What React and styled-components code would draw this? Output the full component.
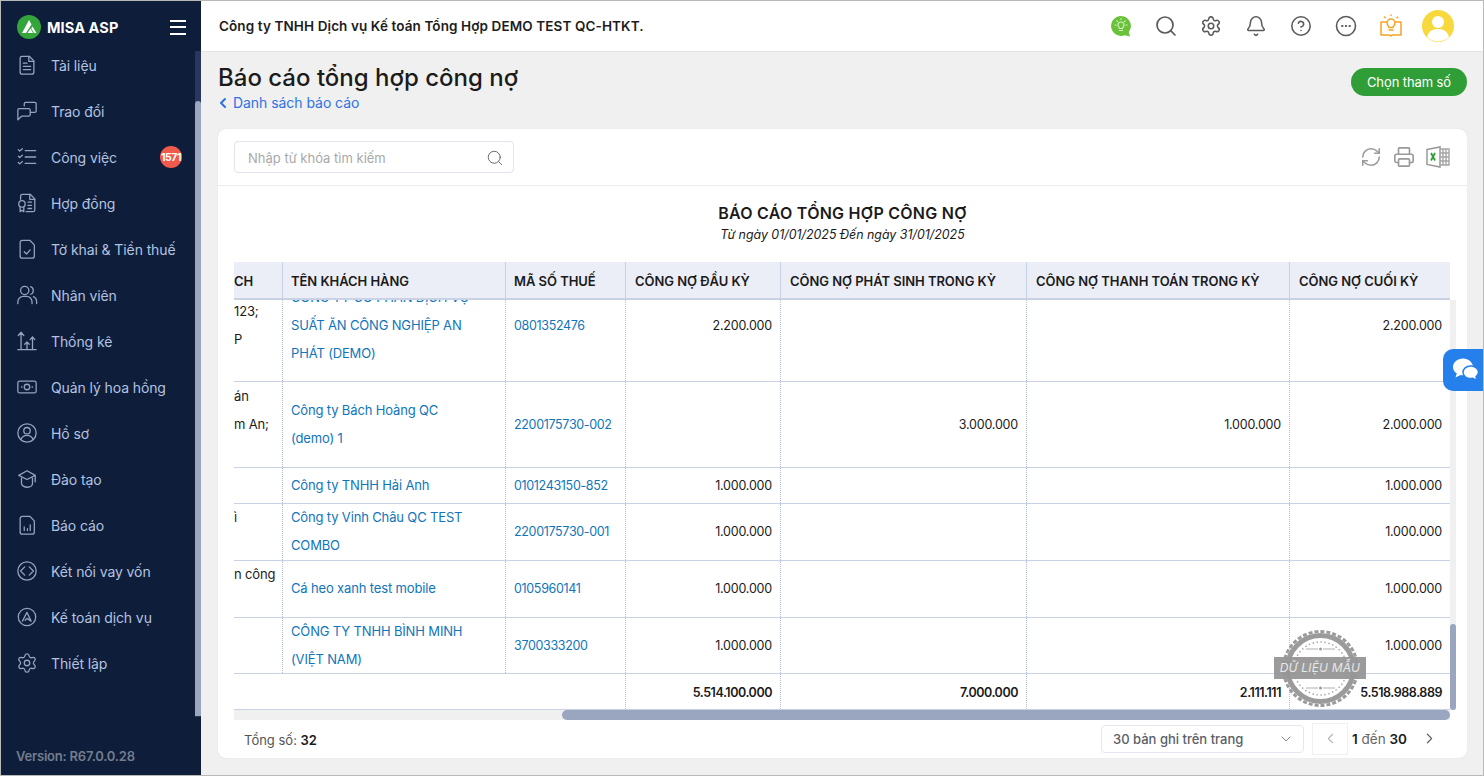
import React from 'react';
import styled, { createGlobalStyle } from 'styled-components';
import { Search, Settings, Bell, CircleHelp, RefreshCw, Printer, ChevronLeft, ChevronRight, ChevronDown } from 'lucide-react';

const GlobalStyle = createGlobalStyle`
    * { box-sizing: border-box; }
    html, body { margin: 0; padding: 0; }
    body { font-family: Inter, "Noto Sans", sans-serif; color: #1a1a1a; overflow: hidden; }
`

const Shell = styled.div`
    display: flex;
    width: 1484px;
    height: 776px;
    border: 1px solid #b9b9b9;
    overflow: hidden;
    position: relative;
`

const Sidebar = styled.aside`
    display: flex;
    flex-direction: column;
    width: 200px;
    flex: none;
    background: #0e1e3a;
    color: #b4c3e0;
`

const Brand = styled.div`
    display: flex;
    align-items: center;
    height: 50px;
    padding: 2px 15px 0 16px;
    gap: 6px;
    flex: none;
`

const BrandName = styled.span`
    flex: 1;
    font-size: 14.5px;
    font-weight: 700;
    letter-spacing: 0.1px;
    color: #fff;
`

const Burger = styled.div`
    display: flex;
    flex-direction: column;
    gap: 4.5px;
    width: 16px;
    span { height: 2px; background: #fff; }
`

const NavArea = styled.div`
    flex: 1;
    display: flex;
    min-height: 0;
`

const NavList = styled.nav`
    flex: 1;
    overflow: hidden;
`

const NavItem = styled.div`
    display: flex;
    align-items: center;
    height: 46px;
    padding-left: 15px;
    font-size: 14px;
    letter-spacing: -0.1px;
    color: #b4c3e0;
    &:first-child { margin-top: -9px; }
`

const NavIcon = styled.svg`
    width: 22px;
    height: 22px;
    margin-right: 13px;
    flex: none;
    fill: none;
    stroke: #93a3c2;
    stroke-width: 1.4;
    stroke-linecap: round;
    stroke-linejoin: round;
`

const Badge = styled.span`
    margin-left: auto;
    margin-right: 13px;
    width: 22px;
    height: 22px;
    border-radius: 50%;
    background: #ef5a4c;
    color: #fff;
    font-size: 10.5px;
    font-weight: 700;
    letter-spacing: -0.5px;
    display: flex;
    align-items: center;
    justify-content: center;
`

const NavScroll = styled.div`
    width: 6px;
    flex: none;
    background: #2a3560;
    display: flex;
    flex-direction: column;
`

const NavThumb = styled.div`
    margin-top: 50px;
    height: 615px;
    background: #9aa5bf;
    border-radius: 3px 3px 0 0;
`

const Version = styled.div`
    height: 58px;
    flex: none;
    padding: 31px 0 0 15px;
    font-size: 13px;
    font-weight: 600;
    letter-spacing: -0.2px;
    color: #737d8e;
`

const Main = styled.div`
    flex: 1;
    display: flex;
    flex-direction: column;
    min-width: 0;
    background: #f0f0f0;
`

const Topbar = styled.header`
    display: flex;
    align-items: center;
    height: 51px;
    flex: none;
    padding: 0 29px 0 18px;
    background: #fff;
    border-bottom: 1px solid #e4e4e4;
`

const Company = styled.div`
    flex: 1;
    font-size: 13.5px;
    letter-spacing: 0.1px;
    font-weight: 600;
    color: #1d1d1d;
`

const TopIcons = styled.div`
    display: flex;
    align-items: center;
`

const TopIcon = styled.span`
    display: flex;
    align-items: center;
    justify-content: center;
    width: 45px;
    color: #5a5a5a;
`

const Avatar = styled.span`
    display: flex;
    margin-left: 9px;
`

const Page = styled.main`
    flex: 1;
    min-height: 0;
    display: flex;
    flex-direction: column;
    padding: 0 16px 17px 17px;
`

const PageHead = styled.div`
    display: flex;
    justify-content: space-between;
    align-items: flex-start;
    height: 77px;
    flex: none;
    padding-top: 11px;
`

const Title = styled.h1`
    margin: 0;
    font-size: 24px;
    line-height: 30px;
    font-weight: 500;
    color: #1b1b1b;
`

const BackLink = styled.a`
    display: flex;
    align-items: center;
    gap: 2px;
    margin-left: -3px;
    font-size: 14px;
    letter-spacing: -0.05px;
    line-height: 20px;
    color: #2f72e4;
`

const GreenButton = styled.button`
    margin-top: 5px;
    width: 116px;
    height: 28px;
    border: 0;
    border-radius: 14px;
    background: #2f9e37;
    color: #fff;
    font: 400 13px Inter, sans-serif;
    letter-spacing: -0.1px;
`

const Card = styled.section`
    flex: 1;
    min-height: 0;
    display: flex;
    flex-direction: column;
    position: relative;
    background: #fff;
    border-radius: 8px;
    box-shadow: 0 0 1px rgba(0, 0, 0, 0.15);
`

const Toolbar = styled.div`
    display: flex;
    align-items: center;
    justify-content: space-between;
    height: 57px;
    flex: none;
    padding: 0 17px 0 16px;
    border-bottom: 1px solid #ececec;
`

const SearchBox = styled.div`
    display: flex;
    align-items: center;
    justify-content: space-between;
    width: 280px;
    height: 32px;
    padding: 1px 9px 0 13px;
    border: 1px solid #e1e4ec;
    border-radius: 4px;
    font-size: 13px;
    color: #a9a9a9;
`

const Tools = styled.div`
    display: flex;
    align-items: center;
    gap: 11px;
    color: #9b9b9b;
`

const ReportHead = styled.div`
    height: 76px;
    flex: none;
    padding-top: 17px;
    text-align: center;
`

const ReportTitle = styled.div`
    font-size: 16px;
    letter-spacing: 0.25px;
    line-height: 20px;
    font-weight: 600;
    color: #1b1b1b;
`

const ReportRange = styled.div`
    margin-top: 3px;
    font-size: 12.4px;
    line-height: 18px;
    font-style: italic;
`

const TableWrap = styled.div`
    margin: 0 11px 0 16px;
`

const gridCols = '48px 223px 120px 155px 246px 263px 161px'

const HeadRow = styled.div`
    display: grid;
    grid-template-columns: ${gridCols};
    width: 1216px;
    height: 38px;
    background: #ebeef7;
    border-bottom: 2px solid #c9d1e4;
`

const HeadCell = styled.div`
    display: flex;
    align-items: center;
    padding: 2px 0 0 8px;
    border-left: 1px solid #c9d1e4;
    font-size: 13px;
    letter-spacing: -0.05px;
    font-weight: 600;
    color: #1b1b1b;
    white-space: nowrap;
    overflow: hidden;
    &:first-child { padding-left: 0; border-left: 0; }
    &:nth-child(n + 4) { padding-left: 9px; }
`

const BodyArea = styled.div`
    display: flex;
    height: 410px;
`

const Viewport = styled.div`
    width: 1216px;
    flex: none;
    overflow: hidden;
`

const Row = styled.div`
    display: grid;
    grid-template-columns: ${gridCols};
    height: ${p => p.$h}px;
    margin-top: ${p => p.$top || 0}px;
    border-bottom: 1px solid #c9d1e4;
`

const Cell = styled.div`
    display: flex;
    align-items: center;
    border-left: 1px dotted #b4c0da;
    font-size: 13px;
    line-height: 28px;
    color: #1b1b1b;
    overflow: hidden;
`

const LeadCell = styled(Cell)`
    border-left: 0;
    padding-bottom: 2px;
    white-space: pre;
    letter-spacing: -0.15px;
`

const BlankCell = styled(Cell)`
    border-left: 0;
`

const NameCell = styled(Cell)`
    padding: 0 24px 2px 8px;
    letter-spacing: -0.15px;
    color: #0f75bc;
`

const TaxCell = styled(Cell)`
    padding-left: 8px;
    font-size: 12.5px;
    letter-spacing: -0.33px;
    white-space: nowrap;
    color: #0f75bc;
`

const AmountCell = styled(Cell)`
    justify-content: flex-end;
    padding: ${p => (p.$bold ? 2 : 0)}px 8px 0 0;
    font-size: 12.5px;
    letter-spacing: ${p => (p.$bold ? -0.45 : -0.2)}px;
    font-weight: ${p => (p.$bold ? 600 : 400)};
`

const VTrack = styled.div`
    width: 6px;
    background: #f0f0f0;
    display: flex;
    flex-direction: column;
    justify-content: flex-end;
`

const VThumb = styled.div`
    height: 86px;
    background: #9aa5bf;
    border-radius: 3px;
`

const HTrack = styled.div`
    width: 1216px;
    height: 10px;
    background: #f0f0f0;
    display: flex;
    justify-content: flex-end;
`

const HThumb = styled.div`
    width: 888px;
    background: #9aa5bf;
    border-radius: 5px;
`

const Footer = styled.div`
    flex: 1;
    display: flex;
    align-items: center;
    padding: 0 29px 1px 26px;
    font-size: 13px;
    color: #555;
`

const Total = styled.div`
    flex: 1;
    margin-top: 2px;
    b { color: #1b1b1b; font-weight: 600; }
`

const PageSize = styled.div`
    display: flex;
    align-items: center;
    justify-content: space-between;
    width: 203px;
    height: 28px;
    padding: 0 9px 0 11px;
    border: 1px solid #e4e7ef;
    border-radius: 4px;
    font-weight: 500;
    color: #5a5f68;
`

const PrevBox = styled.span`
    display: flex;
    align-items: center;
    justify-content: center;
    width: 36px;
    height: 32px;
    margin: 0 4px 0 8px;
    border: 1px solid #f0f0f0;
    color: #b5b5b5;
`

const PageInfo = styled.span`
    font-size: 13.5px;
    color: #666;
    b { color: #1b1b1b; font-weight: 600; }
`

const NextBox = styled.span`
    display: flex;
    margin-left: 14px;
    color: #666;
`

const Stamp = styled.div`
    position: absolute;
    left: 1056px;
    top: 501px;
    width: 92px;
    height: 77px;
    display: flex;
    justify-content: center;
    pointer-events: none;
`

const StampBand = styled.div`
    position: absolute;
    left: 0;
    right: 0;
    top: 27px;
    height: 22px;
    background: rgba(150, 150, 150, 0.95);
    color: #e8e8e8;
    font-size: 12px;
    font-style: italic;
    line-height: 22px;
    text-align: center;
    letter-spacing: 0.2px;
    white-space: nowrap;
`

const ChatFab = styled.div`
    position: absolute;
    right: 0;
    top: 348px;
    width: 40px;
    height: 42px;
    padding-left: 5px;
    background: #2680eb;
    border-radius: 10px 0 0 10px;
    display: flex;
    align-items: center;
    justify-content: center;
`

const navItems = [
    { label: 'Tài liệu', icon: <><path d="M6.5 2.5h8l5 5v12a2.5 2.5 0 0 1-2.5 2.5H7a2.5 2.5 0 0 1-2.5-2.5v-15a2 2 0 0 1 2-2z" /><path d="M14 2.5V8h5.5M8 10h4M8 13.5h8M8 17h8" /></> },
    { label: 'Trao đổi', icon: <><path d="M9 6.5V4a1.5 1.5 0 0 1 1.5-1.5h10A1.5 1.5 0 0 1 22 4v8a1.5 1.5 0 0 1-1.5 1.5H16" /><path d="M3.5 9.5H14a1.5 1.5 0 0 1 1.5 1.5v5a1.5 1.5 0 0 1-1.5 1.5H6.5L2 21.5V11a1.5 1.5 0 0 1 1.5-1.5z" /></> },
    { label: 'Công việc', badge: '1571', icon: <><path d="M10 5h11.5M10 12h11.5M10 19h11.5M2.5 4l1.5 1.5L7 3M2.5 11l1.5 1.5L7 10M2.5 18l1.5 1.5L7 17" /></> },
    { label: 'Hợp đồng', icon: <><path d="M5 8V4.500A2 2 0 0 1 7 2.500h8.500l5 5V19.500a2 2 0 0 1-2 2H11" /><path d="M15 2.500V8h5.500M13 11h4M13 14.500h4M13 18h4" /><circle cx="6.500" cy="13" r="3.500" /><path d="M4.500 16v5.500l2-1.500 2 1.500V16" /></> },
    { label: 'Tờ khai & Tiền thuế', icon: <><path d="M7 2.500h8l5 5v12a2.500 2.500 0 0 1-2.500 2.500h-10.500A2.500 2.500 0 0 1 4.500 19.500V5A2.500 2.500 0 0 1 7 2.500z" /><path d="M9 15l2.500 2.500L15.500 13" /></> },
    { label: 'Nhân viên', icon: <><circle cx="9.500" cy="7" r="4.500" /><path d="M2 21.500v-2a6 6 0 0 1 6-6h3.500a6 6 0 0 1 6 6v2M16 2.800a4.500 4.500 0 0 1 0 8.400M19 13.800a6 6 0 0 1 3.500 5.500v2" /></> },
    { label: 'Thống kê', icon: <><path d="M2 21.500h20M5.500 21V3M2.500 6l3-3.500 3 3.500M12 21v-8M9.500 15.500l2.500-2.500 2.500 2.500M18 21V7.500M15.500 10.500l2.500-3 2.500 3" /></> },
    { label: 'Quản lý hoa hồng', icon: <><rect x="2" y="5.500" width="20" height="13" rx="2" /><circle cx="12" cy="12" r="3" /><path d="M6 12h.5M17.500 12h.5" /></> },
    { label: 'Hồ sơ', icon: <><circle cx="12" cy="12" r="10" /><circle cx="12" cy="9.500" r="3.500" /><path d="M5.500 19c1-3 3.500-4.500 6.500-4.500s5.500 1.500 6.500 4.500" /></> },
    { label: 'Đào tạo', icon: <><path d="M12 3l9 5-9 4.500L3 8z" /><path d="M6 11v6c0 2 3 4 6.500 4s5.500-2 5.500-4v-6M21 8.500V15" /></> },
    { label: 'Báo cáo', icon: <><path d="M7 2.500h8l5 5v12a2.500 2.500 0 0 1-2.500 2.500h-10.500A2.500 2.500 0 0 1 4.500 19.500V5A2.500 2.500 0 0 1 7 2.500z" /><path d="M9 18v-4M12.500 18v-2M15.500 18v-6" /></> },
    { label: 'Kết nối vay vốn', icon: <><circle cx="12" cy="12" r="10" /><path d="M9.500 7.500L5 12l4.500 4.500M14.500 7.500L19 12l-4.500 4.500" /></> },
    { label: 'Kế toán dịch vụ', icon: <><circle cx="12" cy="12" r="9.500" /><path d="M7 16.500L12 7l4.500 9.500-4.500-3-2 2" /></> },
]

const rows = [
    { h: 112, top: -30, lead: '123;\nP', name: 'CÔNG TY CỔ PHẦN DỊCH VỤ SUẤT ĂN CÔNG NGHIỆP AN PHÁT (DEMO)', tax: '0801352476', start: '2.200.000', end: '2.200.000' },
    { h: 86, lead: 'án\nm An;\n\u00a0', name: 'Công ty Bách Hoàng QC (demo) 1', tax: '2200175730-002', gen: '3.000.000', paid: '1.000.000', end: '2.000.000' },
    { h: 36, lead: '', name: 'Công ty TNHH Hải Anh', tax: '0101243150-852', start: '1.000.000', end: '1.000.000' },
    { h: 57, lead: 'ì\n\u00a0', name: 'Công ty Vinh Châu QC TEST COMBO', tax: '2200175730-001', start: '1.000.000', end: '1.000.000' },
    { h: 57, lead: 'n công\n\u00a0', name: 'Cá heo xanh test mobile', tax: '0105960141', start: '1.000.000', end: '1.000.000' },
    { h: 56, lead: '', name: 'CÔNG TY TNHH BÌNH MINH (VIỆT NAM)', tax: '3700333200', start: '1.000.000', end: '1.000.000' },
]

const heads = ['CH', 'TÊN KHÁCH HÀNG', 'MÃ SỐ THUẾ', 'CÔNG NỢ ĐẦU KỲ', 'CÔNG NỢ PHÁT SINH TRONG KỲ', 'CÔNG NỢ THANH TOÁN TRONG KỲ', 'CÔNG NỢ CUỐI KỲ']

function App() {
    return (
        <Shell>
            <GlobalStyle />
            <Sidebar>
                <Brand>
                    <svg width="24" height="24" viewBox="0 0 24 24">
                        <circle cx="12" cy="12" r="12" fill="#33a53b" />
                        <path d="M5 18L12 5l2.500 4.500L9 18zM10.500 18l3-4.500L16 18zM15.500 11.500L19.500 18h-2.500l-2.800-4.500z" fill="#fff" />
                    </svg>
                    <BrandName>MISA ASP</BrandName>
                    <Burger><span /><span /><span /></Burger>
                </Brand>
                <NavArea>
                    <NavList>
                        {navItems.map(item => (
                            <NavItem key={item.label}>
                                <NavIcon viewBox="0 0 24 24">{item.icon}</NavIcon>
                                {item.label}
                                {item.badge && <Badge>{item.badge}</Badge>}
                            </NavItem>
                        ))}
                        <NavItem>
                            <Settings size={22} strokeWidth={1.4} color="#93a3c2" style={{ marginRight: 13, flex: 'none' }} />
                            Thiết lập
                        </NavItem>
                    </NavList>
                    <NavScroll><NavThumb /></NavScroll>
                </NavArea>
                <Version>Version: R67.0.0.28</Version>
            </Sidebar>
            <Main>
                <Topbar>
                    <Company>Công ty TNHH Dịch vụ Kế toán Tổng Hợp DEMO TEST QC-HTKT.</Company>
                    <TopIcons>
                        <TopIcon>
                            <svg width="22" height="22" viewBox="0 0 22 22">
                                <path d="M11 1a10 10 0 1 0 4 19.200L20 21.500l-1.200-4.500A10 10 0 0 0 11 1z" fill="#69c23a" />
                                <path d="M8 10a3 3 0 1 1 6 0c0 1.500-1.200 2-1.500 3.500h-3C9.200 12 8 11.500 8 10zM9.500 15.500h3M11 3.500v1M5 10h1M16 10h1M6.800 5.800l.7.7M15.200 5.800l-.7.7" fill="none" stroke="#d7f2c4" strokeWidth="1.100" strokeLinecap="round" />
                            </svg>
                        </TopIcon>
                        <TopIcon><Search size={24} strokeWidth={1.7} /></TopIcon>
                        <TopIcon><Settings size={22} strokeWidth={1.7} /></TopIcon>
                        <TopIcon><Bell size={22} strokeWidth={1.7} /></TopIcon>
                        <TopIcon><CircleHelp size={22} strokeWidth={1.7} /></TopIcon>
                        <TopIcon>
                            <svg width="22" height="22" viewBox="0 0 22 22" fill="none" stroke="currentColor" strokeWidth="1.600">
                                <circle cx="11" cy="11" r="9.500" />
                                <path d="M7 11h.6M10.700 11h.6M14.400 11h.6" strokeLinecap="round" strokeWidth="1.800" />
                            </svg>
                        </TopIcon>
                        <TopIcon>
                            <svg width="24" height="24" viewBox="0 0 24 24" fill="none" stroke="#f7a325" strokeWidth="1.500" strokeLinecap="round" strokeLinejoin="round">
                                <path d="M7.500 8H2v13h8c1 0 1.500.5 2 1 .5-.5 1-1 2-1h8V8h-5.500" />
                                <path d="M8 9a4 4 0 1 1 8 0c0 2-1.500 2.500-2 4.500h-4C9.500 11.500 8 11 8 9zM10 16h4M12 1v.5M5.500 3l.7.7M18.500 3l-.7.7" />
                            </svg>
                        </TopIcon>
                        <Avatar>
                            <svg width="32" height="32" viewBox="0 0 32 32">
                                <circle cx="16" cy="16" r="16" fill="#f7d93e" />
                                <circle cx="16" cy="12" r="6" fill="#fff" />
                                <path d="M5 27c1.500-6 6-8 11-8s9.500 2 11 8a16 16 0 0 1-22 0z" fill="#fff" />
                            </svg>
                        </Avatar>
                    </TopIcons>
                </Topbar>
                <Page>
                    <PageHead>
                        <div>
                            <Title>Báo cáo tổng hợp công nợ</Title>
                            <BackLink><ChevronLeft size={16} strokeWidth={3} />Danh sách báo cáo</BackLink>
                        </div>
                        <GreenButton>Chọn tham số</GreenButton>
                    </PageHead>
                    <Card>
                        <Toolbar>
                            <SearchBox>
                                Nhập từ khóa tìm kiếm
                                <Search size={18} strokeWidth={1.3} color="#666" />
                            </SearchBox>
                            <Tools>
                                <RefreshCw size={22} strokeWidth={1.7} />
                                <Printer size={22} strokeWidth={1.8} />
                                <svg width="24" height="22" viewBox="0 0 24 22">
                                    <path d="M1 3.500L14 1v20L1 18.500z" fill="#fff" stroke="#999" strokeWidth="1.500" />
                                    <path d="M14 3h9v16h-9M17 3v16M20 3v16M14 7h9M14 11h9M14 15h9" fill="none" stroke="#a5a5a5" strokeWidth="1.400" />
                                    <path d="M5 7l4 7.500M9 7l-4 7.500" stroke="#2f9e37" strokeWidth="1.800" fill="none" />
                                </svg>
                            </Tools>
                        </Toolbar>
                        <ReportHead>
                            <ReportTitle>BÁO CÁO TỔNG HỢP CÔNG NỢ</ReportTitle>
                            <ReportRange>Từ ngày 01/01/2025 Đến ngày 31/01/2025</ReportRange>
                        </ReportHead>
                        <TableWrap>
                            <HeadRow>
                                {heads.map(h => <HeadCell key={h}>{h}</HeadCell>)}
                            </HeadRow>
                            <BodyArea>
                                <Viewport>
                                    {rows.map(r => (
                                        <Row key={r.tax} $h={r.h} $top={r.top}>
                                            <LeadCell>{r.lead}</LeadCell>
                                            <NameCell>{r.name}</NameCell>
                                            <TaxCell>{r.tax}</TaxCell>
                                            <AmountCell>{r.start}</AmountCell>
                                            <AmountCell>{r.gen}</AmountCell>
                                            <AmountCell>{r.paid}</AmountCell>
                                            <AmountCell>{r.end}</AmountCell>
                                        </Row>
                                    ))}
                                    <Row $h={36}>
                                        <BlankCell />
                                        <BlankCell />
                                        <BlankCell />
                                        <AmountCell $bold>5.514.100.000</AmountCell>
                                        <AmountCell $bold>7.000.000</AmountCell>
                                        <AmountCell $bold>2.111.111</AmountCell>
                                        <AmountCell $bold>5.518.988.889</AmountCell>
                                    </Row>
                                </Viewport>
                                <VTrack><VThumb /></VTrack>
                            </BodyArea>
                            <HTrack><HThumb /></HTrack>
                        </TableWrap>
                        <Footer>
                            <Total>Tổng số: <b>32</b></Total>
                            <PageSize>30 bản ghi trên trang<ChevronDown size={16} strokeWidth={1.5} color="#888" /></PageSize>
                            <PrevBox><ChevronLeft size={17} strokeWidth={1.5} /></PrevBox>
                            <PageInfo><b>1</b> đến <b>30</b></PageInfo>
                            <NextBox><ChevronRight size={17} strokeWidth={1.7} /></NextBox>
                        </Footer>
                        <Stamp>
                            <svg width="77" height="77" viewBox="0 0 77 77" fill="none">
                                <circle cx="38.5" cy="38.5" r="37" stroke="#9b9b9b" strokeWidth="3" strokeDasharray="4 2" />
                                <circle cx="38.5" cy="38.5" r="33" stroke="#9b9b9b" strokeWidth="5" />
                                <circle cx="38.5" cy="38.5" r="26.5" stroke="#a8a8a8" strokeWidth="1.5" strokeDasharray="1.5 2.5" />
                                <path d="M24 19h12M41 19h12M24 58h12M41 58h12" stroke="#b0b0b0" strokeWidth="1.2" />
                                <circle cx="38.5" cy="19" r="1.5" fill="#9b9b9b" />
                                <circle cx="38.5" cy="58" r="1.5" fill="#9b9b9b" />
                            </svg>
                            <StampBand>DỮ LIỆU MẪU</StampBand>
                        </Stamp>
                    </Card>
                </Page>
            </Main>
            <ChatFab>
                <svg width="26" height="24" viewBox="2 3 26 23">
                    <path d="M12 3C6.500 3 2 6.800 2 11.500c0 2.700 1.500 5 3.800 6.500L4.500 22l5-2.500c.8.200 1.600.2 2.500.2 5.500 0 10-3.800 10-8.200S17.500 3 12 3z" fill="#fff" />
                    <path d="M19.500 10.500c-4.200 0-7.500 2.800-7.500 6.300s3.300 6.200 7.500 6.200c.7 0 1.400-.1 2-.2l4.500 2.200-1-3.700c1.500-1.200 2.500-2.800 2.500-4.500 0-3.500-3.300-6.300-7.500-6.300z" fill="#fff" stroke="#2680eb" strokeWidth="1.500" />
                </svg>
            </ChatFab>
        </Shell>
    );
}

export default App;
